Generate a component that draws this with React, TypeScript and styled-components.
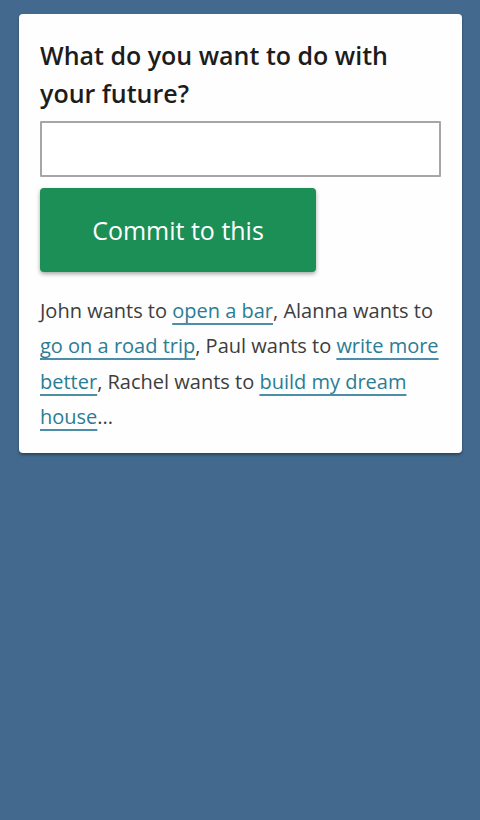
import React from "react";
import styled, { createGlobalStyle } from "styled-components";

const Global = createGlobalStyle`
  html, body {
    margin: 0;
    padding: 0;
    background: #436a8e;
    min-height: 100%;
  }
  body {
    font-family: "Open Sans", "Noto Sans", "Liberation Sans", sans-serif;
  }
`;

const Page = styled.div`
  min-height: 820px;
  padding: 14px 18px 0 19px;
  box-sizing: border-box;
  background: #436a8e;
`;

const Card = styled.div`
  background: #fefefe;
  border-radius: 4px;
  box-shadow: 0 2px 3px rgba(0, 0, 0, 0.35);
  padding: 22px 21px 19px 21px;
  box-sizing: border-box;
`;

const Heading = styled.h1`
  margin: 0;
  font-size: 25px;
  line-height: 38px;
  letter-spacing: 0;
  font-weight: 600;
  color: #1c1c1c;
`;

const Field = styled.input`
  display: block;
  width: 100%;
  height: 56px;
  margin-top: 9px;
  border: 2px solid #a6a6a6;
  border-radius: 1px;
  box-sizing: border-box;
  background: #fff;
  font-size: 20px;
  font-family: inherit;
`;

const CommitButton = styled.button`
  display: block;
  margin-top: 11px;
  width: 276px;
  height: 84px;
  border: none;
  border-radius: 4px;
  background: #1b8f56;
  color: #ffffff;
  font-family: inherit;
  font-size: 25px;
  font-weight: 400;
  box-shadow: 0 2px 4px rgba(0, 0, 0, 0.35);
`;

const Examples = styled.p`
  margin: 21px 0 0 0;
  font-size: 20px;
  line-height: 35.3px;
  letter-spacing: 0;
  color: #3d3d3d;
`;

const Goal = styled.a`
  color: #2b7c94;
  text-decoration: underline;
  text-decoration-color: #4b8ea5;
  text-decoration-thickness: 2px;
  text-underline-offset: 5px;
  text-decoration-skip-ink: none;
`;

const people = [
  { name: "John", goal: "open a bar" },
  { name: "Alanna", goal: "go on a road trip" },
  { name: "Paul", goal: "write more better" },
  { name: "Rachel", goal: "build my dream house" },
];

export default function App() {
  return (
    <>
      <Global />
      <Page>
        <Card>
          <Heading>What do you want to do with your future?</Heading>
          <Field type="text" aria-label="Your goal" />
          <CommitButton>Commit to this</CommitButton>
          <Examples>
            {people.map((p, i) => (
              <React.Fragment key={p.name}>
                {p.name} wants to <Goal href="#">{p.goal}</Goal>
                {i < people.length - 1 ? ", " : "..."}
              </React.Fragment>
            ))}
          </Examples>
        </Card>
      </Page>
    </>
  );
}
